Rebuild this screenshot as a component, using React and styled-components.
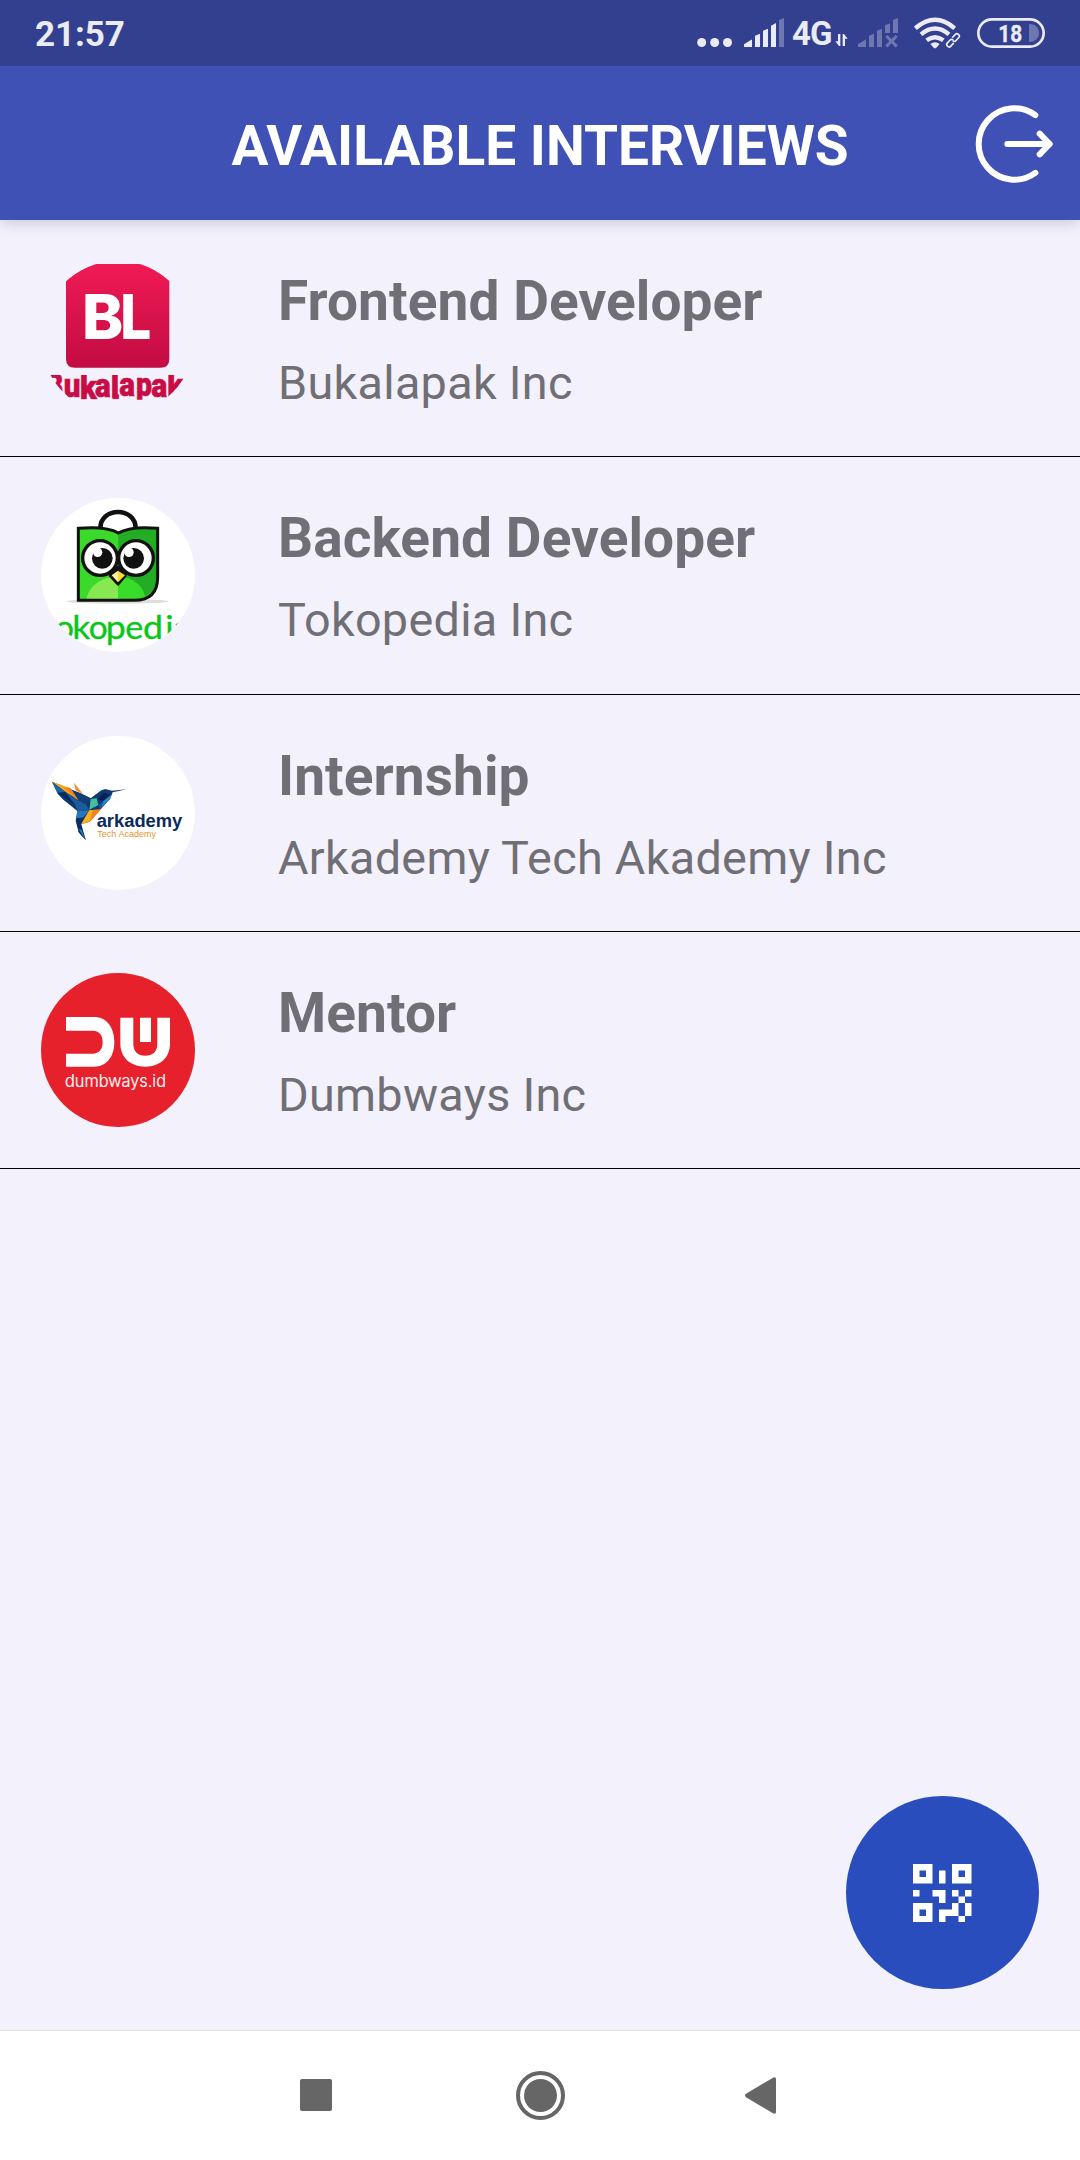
import React from "react";
import styled, { createGlobalStyle } from "styled-components";

const GlobalStyle = createGlobalStyle`
  * { box-sizing: border-box; }
  body { margin: 0; background: #f3f1fc; }
`;

const Screen = styled.div`
  width: 1080px;
  height: 2160px;
  display: flex;
  flex-direction: column;
  overflow: hidden;
  background: #f3f1fc;
  font-family: Roboto, "Liberation Sans", sans-serif;
`;

const StatusBar = styled.div`
  flex: none;
  position: relative;
  z-index: 2;
  height: 66px;
  padding: 0 35px 0 35px;
  display: flex;
  align-items: center;
  justify-content: space-between;
  background: #334090;
  color: #ebebf4;
  fill: #ebebf4;
`;

const Clock = styled.time`
  font-size: 35px;
  line-height: 40px;
  font-weight: 700;
  letter-spacing: -0.1px;
  padding-top: 3px;
`;

const StatusIcons = styled.div`
  display: flex;
  align-items: center;
`;

const StatusGlyph = styled.svg`
  display: block;
  flex: none;
  height: 66px;
  width: ${(p) => p.$width}px;
  margin-right: ${(p) => p.$after || 0}px;
`;

const NetworkLabel = styled.span`
  width: 40px;
  margin-right: 3px;
  margin-left: -1px;
  font-size: 33px;
  line-height: 38px;
  font-weight: 700;
  letter-spacing: -1px;
  padding-top: 2px;
`;

const Header = styled.header`
  flex: none;
  position: relative;
  z-index: 1;
  height: 154px;
  padding: 0 27px;
  display: grid;
  grid-template-columns: 1fr auto 1fr;
  align-items: center;
  background: #3f51b5;
  box-shadow: 0 3px 14px rgba(0, 0, 0, 0.17);
`;

const HeaderTitle = styled.h1`
  grid-column: 2;
  margin: 0;
  padding-top: 6px;
  font-size: 55px;
  line-height: 64px;
  font-weight: 700;
  color: #fff;
`;

const LogoutButton = styled.button`
  justify-self: end;
  border: 0;
  padding: 2px 0 0;
  background: none;
  svg { display: block; width: 78px; height: 78px; }
`;

const List = styled.main`
  flex: 1;
  display: flex;
  flex-direction: column;
`;

const Row = styled.article`
  height: 237.333px;
  flex: none;
  display: flex;
  align-items: flex-start;
  gap: 83px;
  padding: 41px 41px 0;
  border-bottom: 1px solid #000;
`;

const Avatar = styled.div`
  flex: none;
  width: 154px;
  height: 154px;
  border-radius: 50%;
  overflow: hidden;
  background: ${(p) => p.$bg};
  svg { display: block; width: 100%; height: 100%; }
`;

const RowText = styled.div`
  display: flex;
  flex-direction: column;
  gap: 23px;
  padding-top: 8px;
  color: #706f75;
`;

const Position = styled.h2`
  margin: 0;
  font-size: 55px;
  line-height: 64px;
  font-weight: 700;
  letter-spacing: 0.08px;
`;

const Company = styled.p`
  margin: 0;
  font-size: 46.75px;
  line-height: 55px;
  letter-spacing: 0.3px;
`;

const ScanButton = styled.button`
  align-self: flex-end;
  margin: auto 41px 41px 0;
  width: 193px;
  height: 193px;
  border: 0;
  border-radius: 50%;
  padding: 1px 0 0;
  display: flex;
  align-items: center;
  justify-content: center;
  background: #294dbc;
  svg { display: block; width: 58.5px; height: 58.5px; }
`;

const NavBar = styled.nav`
  flex: none;
  height: 130px;
  padding-left: 300px;
  padding-right: 304px;
  display: flex;
  align-items: center;
  justify-content: space-between;
  border-top: 1px solid #e2e2e2;
  background: #fff;
`;

const RecentKey = styled.span`
  width: 32px;
  height: 32px;
  border-radius: 2px;
  margin: 0 20px 1px 0;
  background: #666;
`;

const HomeKey = styled.span`
  width: 49px;
  height: 49px;
  border-radius: 50%;
  border: 4px solid #666;
  padding: 4px;
  background: #666 content-box;
  margin-right: 16px;
`;

const BackKey = styled.svg`
  display: block;
  width: 31px;
  height: 37px;
`;

function BukalapakLogo() {
  // glyph, x, baseline, width
  const word = [
    ["B", 46, 472, 54], ["u", 101, 471, 50], ["k", 150, 477, 50], ["a", 195, 470, 47], ["l", 242, 475, 25],
    ["a", 268, 469, 47], ["p", 318, 467, 48], ["a", 364, 471, 48], ["k", 412, 472, 50],
  ];
  return (
    <svg viewBox="33 63 462 462">
      <defs>
        <linearGradient id="blRed" x1="0" y1="0" x2="0" y2="1">
          <stop offset="0" stopColor="#f01a54" />
          <stop offset="1" stopColor="#c20c43" />
        </linearGradient>
        <clipPath id="blBand"><rect x="33" y="405" width="462" height="74" /></clipPath>
      </defs>
      <path d="M108 122Q146 89 195 72H334Q376 86 418 122V356Q418 383 391 383H135Q108 383 108 356Z" fill="url(#blRed)" />
      <g fontFamily="Inter, sans-serif" fontWeight="800" fontSize="187" fill="#fff">
        <text x="156" y="296" textLength="124" lengthAdjust="spacingAndGlyphs">B</text>
        <text x="271" y="296" textLength="93" lengthAdjust="spacingAndGlyphs">L</text>
      </g>
      <g clipPath="url(#blBand)" fill="#c80d46" stroke="#c80d46" strokeWidth="2" fontFamily="Roboto, sans-serif" fontWeight="900" fontSize="100">
        {word.map(([c, x, y, w]) => (
          <text key={x} x={x} y={y} textLength={w} lengthAdjust="spacingAndGlyphs">{c}</text>
        ))}
        <path d="M249 464H266V476H249Z" />
      </g>
    </svg>
  );
}

function TokopediaLogo() {
  // glyph, x, width
  const word = [
    ["o", 75, 57], ["k", 127, 54], ["o", 176, 57], ["p", 227, 60], ["e", 286, 54],
    ["d", 339, 60], ["i", 406, 25], ["a", 431, 52],
  ];
  return (
    <svg viewBox="33 39 462 462">
      <ellipse cx="263" cy="349" rx="154" ry="7" fill="#dedede" />
      <path d="M211 130C211 98 236 81 264 81S317 98 317 130" fill="none" stroke="#111" strokeWidth="14" />
      <path d="M145 130C190 126 238 128 265 144C292 128 342 126 383 130V276Q383 346 313 346H145Z" fill="#3bd92a" />
      <path d="M265 144C292 128 342 126 383 130V276Q383 315 343 336C338 302 308 276 264 276Z" fill="#23ad25" />
      <path d="M170 342C176 300 218 275 264 275V342Z" fill="#87e851" />
      <path d="M264 275C310 277 340 302 345 335L313 342H264Z" fill="#39dc29" />
      <path d="M145 130C190 126 238 128 265 144C292 128 342 126 383 130V276Q383 346 313 346H145Z" fill="none" stroke="#111" strokeWidth="9" />
      <path d="M242 258L264 246L286 258V272L264 298L240 272Z" fill="#111" stroke="#111" strokeWidth="8" strokeLinejoin="round" />
      <circle cx="210" cy="219" r="52" fill="#fff" stroke="#111" strokeWidth="10" />
      <circle cx="318" cy="219" r="52" fill="#fff" stroke="#111" strokeWidth="10" />
      <circle cx="217" cy="220" r="31" fill="#111" />
      <circle cx="311" cy="220" r="31" fill="#111" />
      <circle cx="203" cy="202" r="14" fill="#fff" />
      <circle cx="297" cy="202" r="14" fill="#fff" />
      <path d="M245 271L264 257V292Z" fill="#fff0a0" />
      <path d="M264 257L285 271L264 292Z" fill="#f9d936" />
      <g fontFamily="Lato, sans-serif" fontSize="99" fill="#08c719" stroke="#08c719" strokeWidth="1">
        {word.map(([c, x, w]) => (
          <text key={x} x={x} y="461" textLength={w} lengthAdjust="spacingAndGlyphs">{c}</text>
        ))}
      </g>
    </svg>
  );
}

function ArkademyLogo() {
  return (
    <svg viewBox="33 33 462 462">
      <path d="M66 170L145 202L182 220L214 196L226 192L246 197L290 193L248 202L240 222L212 253L178 290L154 297L167 345L146 322L137 288L142 258L100 224L83 206Z" fill="#0d3a70" />
      <path d="M66 170L122 190L145 226L108 202Z" fill="#f9a61a" />
      <path d="M66 170L108 202L83 203Z" fill="#1c64a8" />
      <path d="M120 188L145 226L131 212L102 188Z" fill="#f58220" />
      <path d="M132 173L159 207L137 196Z" fill="#f58a1f" />
      <path d="M83 203L108 202L136 240Z" fill="#082a5b" />
      <path d="M136 238L145 226L167 237L178 255L142 258Z" fill="#1c5c9c" />
      <path d="M108 203L128 213L145 228L136 240Z" fill="#1c5a9a" />
      <path d="M145 202L182 220L167 237L145 226Z" fill="#123f78" />
      <path d="M182 222L200 220L205 240L178 254Z" fill="#45bfa0" />
      <path d="M203 222L222 203L240 210L220 228Z" fill="#061f4c" />
      <path d="M220 228L246 208L240 222L212 250Z" fill="#2e83cf" />
      <path d="M205 240L220 228L212 253Z" fill="#14569b" />
      <path d="M178 256L214 252L180 290L154 297Z" fill="#f58220" />
      <path d="M154 297L178 256L188 256L180 288Z" fill="#f9b21a" />
      <path d="M142 258L178 256L159 278L139 280Z" fill="#2477bd" />
      <path d="M139 280L159 278L152 300L167 345L146 322Z" fill="#0b2d62" />
      <path d="M146 312L155 315L167 345Z" fill="#2f7fc2" />
      <text x="200" y="306" textLength="257" lengthAdjust="spacingAndGlyphs" fontFamily="'Liberation Sans', sans-serif" fontWeight="700" fontSize="56" fill="#0b2a5e">arkademy</text>
      <text x="202" y="336" textLength="176" lengthAdjust="spacingAndGlyphs" fontFamily="'Liberation Sans', sans-serif" fontSize="27" fill="#e8932e">Tech Academy</text>
    </svg>
  );
}

function DumbwaysLogo() {
  return (
    <svg viewBox="33 39 462 462" fill="#fff">
      <path d="M108 171H192C230 171 253 202 253 246S230 320 192 320H108V281H188C207 281 218 268 218 246S207 212 188 212H108Z" />
      <path d="M271 173H310V252C310 275 324 287 346 287S382 275 382 252V173H420V250C420 294 390 320 346 320S271 294 271 250Z" />
      <path d="M330 173H363V246H330Z" />
      <text x="105" y="381" textLength="303" lengthAdjust="spacingAndGlyphs" fontFamily="Inter, sans-serif" fontWeight="300" fontSize="50" stroke="#fff" strokeWidth=".6">dumbways.id</text>
    </svg>
  );
}

const interviews = [
  { position: "Frontend Developer", company: "Bukalapak Inc", Logo: BukalapakLogo, bg: "transparent" },
  { position: "Backend Developer", company: "Tokopedia Inc", Logo: TokopediaLogo, bg: "#fff" },
  { position: "Internship", company: "Arkademy Tech Akademy Inc", Logo: ArkademyLogo, bg: "#fff" },
  { position: "Mentor", company: "Dumbways Inc", Logo: DumbwaysLogo, bg: "#e7212b" },
];

function StatusBarContent() {
  return (
    <StatusBar>
      <Clock>21:57</Clock>
      <StatusIcons>
        <StatusGlyph viewBox="51 0 105 198" $width={35} $after={12}>
          <circle cx="65" cy="127.500" r="13.500" />
          <circle cx="104" cy="127.500" r="13.500" />
          <circle cx="142.500" cy="127.500" r="13.500" />
        </StatusGlyph>
        <StatusGlyph viewBox="192 0 120 198" $width={40} $after={9}>
          <path d="M192 141V133L214 119Q216 118 216 121V141ZM225 141V107L240 101V141ZM249 141V92L264 86V141ZM273 141V77L288 69V141Z" />
          <path opacity=".32" d="M297 141V60L312 54V141Z" />
        </StatusGlyph>
        <NetworkLabel>4G</NetworkLabel>
        <StatusGlyph viewBox="465 0 39 198" $width={13} $after={10}>
          <path d="M474 102H481V138H477L466 124H474ZM488 138V102H492L503 116H495V138Z" />
        </StatusGlyph>
        <StatusGlyph viewBox="534 0 120 198" $width={40} $after={16}>
          <g opacity=".32">
            <path d="M534 141V133L556 119Q558 118 558 121V141ZM567 141V107L582 101V141ZM591 141V92L606 86V141ZM615 99V76L630 70V99ZM639 99V60L654 54V99Z" />
            <path d="M619 108L650 139M650 108L619 139" stroke="#ebebf4" strokeWidth="9" />
          </g>
        </StatusGlyph>
        <StatusGlyph viewBox="702 0 141 198" $width={47} $after={16}>
          <g fill="none" stroke="#ebebf4" strokeWidth="13">
            <path d="M706 85Q765 34 824 85" />
            <path d="M723 103Q765 68 807 103" />
            <path d="M740 121Q765 102 790 121" />
          </g>
          <path d="M751 132Q765 121 779 132L769 143Q765 146 761 143Z" />
          <g transform="rotate(-47 819 121)">
            <rect x="789" y="109" width="60" height="24" fill="#334090" />
            <g fill="none" stroke="#ebebf4" strokeWidth="5">
              <path d="M815 128H801Q795 128 795 121T801 114H814Q820 114 820 121" />
              <path d="M823 114H837Q843 114 843 121T837 128H824Q818 128 818 121" />
            </g>
          </g>
        </StatusGlyph>
        <StatusGlyph viewBox="891 0 204 198" $width={68}>
          <rect x="895" y="58" width="196" height="82" rx="41" fill="none" stroke="#ebebf4" strokeWidth="8" />
          <path opacity=".32" d="M1047 72C1067 72 1077 84 1077 99S1067 126 1047 126Z" />
          <text x="955" y="125" textLength="72" lengthAdjust="spacingAndGlyphs" fontFamily="Roboto, sans-serif" fontWeight="700" fontSize="73" stroke="#ebebf4" strokeWidth="1">18</text>
        </StatusGlyph>
      </StatusIcons>
    </StatusBar>
  );
}

export default function App() {
  return (
    <>
      <GlobalStyle />
      <Screen>
        <StatusBarContent />
        <Header>
          <HeaderTitle>AVAILABLE INTERVIEWS</HeaderTitle>
          <LogoutButton aria-label="Log out">
            <svg viewBox="106 75 234 234" fill="none" stroke="#fff" strokeWidth="18" strokeLinecap="round" strokeLinejoin="round">
              <path d="M287 105.500A107 107 0 1 0 287 278.500M203 192H330M300 161L330 192L300 223" />
            </svg>
          </LogoutButton>
        </Header>
        <List>
          {interviews.map(({ position, company, Logo, bg }) => (
            <Row key={position}>
              <Avatar $bg={bg}><Logo /></Avatar>
              <RowText>
                <Position>{position}</Position>
                <Company>{company}</Company>
              </RowText>
            </Row>
          ))}
          <ScanButton aria-label="Scan QR code">
            <svg viewBox="0 0 9 9" fill="#fff" fillRule="evenodd">
              <path d="M0 0H3V3H0ZM1 1V2H2V1ZM6 0H9V3H6ZM7 1V2H8V1ZM0 6H3V9H0ZM1 7V8H2V7ZM4 1H5V3H4ZM0 4H1V5H0ZM3 4H5V6H4V5H3ZM6 4H7V5H6ZM8 4H9V5H8ZM7 5H8V6H7ZM6 6H7V8H5V9H4V7H6ZM8 6H9V8H8ZM7 8H8V9H7Z" />
            </svg>
          </ScanButton>
        </List>
        <NavBar>
          <RecentKey />
          <HomeKey />
          <BackKey viewBox="0 0 31 37">
            <path d="M1 16.800L28 .7Q31-.7 31 2V35Q31 37.700 28 36.300L1 20.200Q-1 18.500 1 16.800Z" fill="#666" />
          </BackKey>
        </NavBar>
      </Screen>
    </>
  );
}
